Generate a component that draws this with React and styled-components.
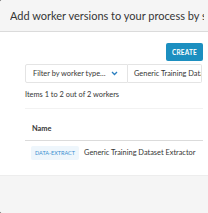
import React from "react";
import styled, { createGlobalStyle } from "styled-components";

const Global = createGlobalStyle`
  html, body { margin: 0; padding: 0; background: #0a0a0a; }
  body { width: 208px; height: 213px; overflow: hidden; font-family: Lato, "Noto Sans", sans-serif; color: #363636; }
  * { box-sizing: border-box; }
`;

const Card = styled.div`
  width: 208px;
  height: 213px;
  display: flex;
  flex-direction: column;
  border-radius: 2px 0 0 2px;
  overflow: hidden;
  background: #fff;
`;

const Head = styled.header`
  height: 32px;
  flex: none;
  display: flex;
  align-items: center;
  padding: 0 4px 0 10px;
  background: #f5f5f5;
  border-bottom: 1px solid #dbdbdb;
`;

const Title = styled.p`
  margin: 0;
  font-size: 11px;
  white-space: nowrap;
  overflow: hidden;
  color: #363636;
`;

const Body = styled.section`
  flex: 1;
  padding: 11px 5px 0 25px;
  display: flex;
  flex-direction: column;
`;

const Actions = styled.div`
  display: flex;
  justify-content: flex-end;
`;

const Button = styled.button`
  height: 18px;
  width: 37px;
  padding: 0;
  border: none;
  border-radius: 2px;
  background: #1c8fc0;
  color: #fff;
  font-family: Lato, sans-serif;
  font-weight: 700;
  font-size: 6.5px;
  letter-spacing: 0.2px;
  text-transform: uppercase;
`;

const Filters = styled.div`
  display: flex;
  margin-top: 3px;
  margin-right: 1px;
  height: 19px;
`;

const Select = styled.div`
  width: 103px;
  display: flex;
  align-items: center;
  justify-content: space-between;
  padding: 0 9px 0 7px;
  border: 1px solid #e4e4e4;
  border-radius: 2px 0 0 2px;
  font-size: 7.4px;
  white-space: nowrap;
`;

const Input = styled.div`
  flex: 1;
  display: flex;
  align-items: center;
  padding-left: 6px;
  border: 1px solid #e4e4e4;
  border-left: none;
  border-radius: 0 2px 2px 0;
  font-size: 7.4px;
  white-space: nowrap;
  overflow: hidden;
`;

const Count = styled.p`
  margin: 7px 0 0;
  font-size: 7.4px;
  padding-bottom: 9px;
  border-bottom: 1px solid #f2f2f2;
`;

const Table = styled.table`
  margin-top: 11px;
  width: 178px;
  border-collapse: collapse;
  font-size: 7.4px;
`;

const Th = styled.th`
  text-align: left;
  font-weight: 700;
  padding: 4px 7px 7px;
  border-bottom: 1px solid #dbdbdb;
`;

const Td = styled.td`
  padding: 5px 6px;
  white-space: nowrap;
`;

const Tag = styled.span`
  display: inline-block;
  padding: 4px 4px;
  margin-right: 5px;
  border-radius: 2px;
  background: #eef6fc;
  color: #3a8ed0;
  font-size: 5.5px;
  text-transform: uppercase;
  vertical-align: middle;
`;

const Foot = styled.footer`
  height: 38px;
  flex: none;
  background: #f5f5f5;
  border-top: 1px solid #ededed;
`;

const Chevron = () => (
  <svg width="7" height="5" viewBox="0 0 7 5">
    <path d="M1 1 L3.5 3.5 L6 1" fill="none" stroke="#2b7fc0" strokeWidth="1.3" />
  </svg>
);

export default function App() {
  return (
    <>
      <Global />
      <Card>
        <Head>
          <Title>Add worker versions to your process by selecting them</Title>
        </Head>
        <Body>
          <Actions>
            <Button>Create</Button>
          </Actions>
          <Filters>
            <Select>
              <span>Filter by worker type…</span>
              <Chevron />
            </Select>
            <Input>Generic Training Dataset</Input>
          </Filters>
          <Count>Items 1 to 2 out of 2 workers</Count>
          <Table>
            <thead>
              <tr>
                <Th>Name</Th>
              </tr>
            </thead>
            <tbody>
              <tr>
                <Td>
                  <Tag>data-extract</Tag>
                  Generic Training Dataset Extractor
                </Td>
              </tr>
            </tbody>
          </Table>
        </Body>
        <Foot />
      </Card>
    </>
  );
}
